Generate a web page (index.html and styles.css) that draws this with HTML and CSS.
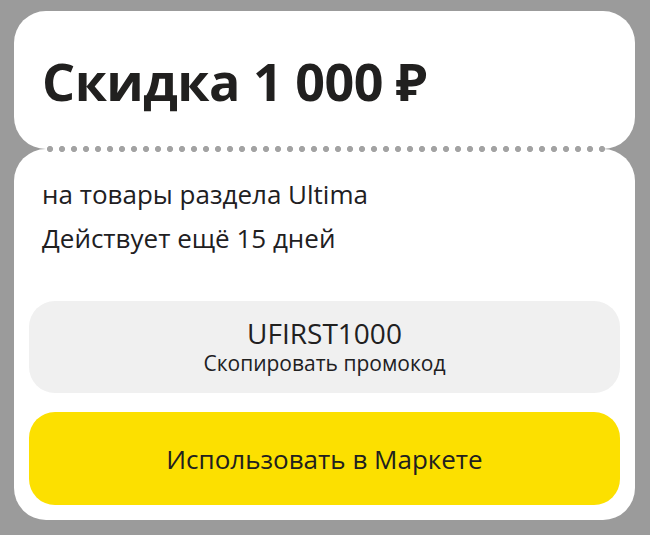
FILE: index.html
```html
<!DOCTYPE html>
<html lang="ru">
<head>
  <meta charset="UTF-8">
  <title>Скидка 1 000 ₽</title>
  <meta name="viewport" content="width=device-width, initial-scale=1.0">
  <link rel="stylesheet" href="styles.css">
</head>
<body>

<!-- Promo coupon -->
<div class="coupon">
  <div class="coupon-head">
    <h1>Скидка 1 000 ₽</h1>
  </div>
  <div class="coupon-body">
    <div class="terms">
      <p>на товары раздела Ultima</p>
      <p>Действует ещё 15 дней</p>
    </div>
    <button class="promo">
      <span class="promo-code">UFIRST1000</span>
      <span class="promo-hint">Скопировать промокод</span>
    </button>
    <button class="btn-use">Использовать в Маркете</button>
  </div>
</div>

</body>
</html>
```

FILE: styles.css
```css
body {
  margin: 0; background: #9b9b9b; color: #21201f;
  font-family: 'Open Sans', 'Noto Sans', sans-serif;
}
.coupon { width: 621px; margin: 11px 0 0 14px; }
.coupon-head {
  background: white; border-radius: 32px; height: 138px;
  display: flex; align-items: center; padding-left: 28px;
}
h1 { margin: 0; font-size: 52px; font-weight: 700; letter-spacing: -0.5px; }

/* perforation on the seam between the two halves */
.coupon-body {
  position: relative; background: white; border-radius: 32px;
  height: 371px; box-sizing: border-box; padding: 23px 15px 15px;
  display: flex; flex-direction: column;
}
.coupon-body::before {
  content: ""; position: absolute; top: -3px; left: 30px; right: 30px; height: 6px;
  background-image: radial-gradient(circle, #a3a3a3 2.8px, transparent 3.2px);
  background-size: 12px 6px;
}
.terms { padding-left: 13px; }
.terms p { margin: 0; font-size: 26px; line-height: 44px; }

.promo, .btn-use {
  flex-shrink: 0; border: none; border-radius: 26px; width: 100%;
  font-family: inherit; color: #21201f; cursor: pointer;
}
.promo {
  margin-top: 41px; height: 92px; background: #f0f0f0;
  display: flex; flex-direction: column; align-items: center; justify-content: center;
}
.promo-code { font-size: 28px; line-height: 32px; }
.promo-hint { font-size: 21px; line-height: 28px; }
.btn-use {
  margin-top: 19px; height: 93px; background: #fce000; font-size: 26px;
}
```
